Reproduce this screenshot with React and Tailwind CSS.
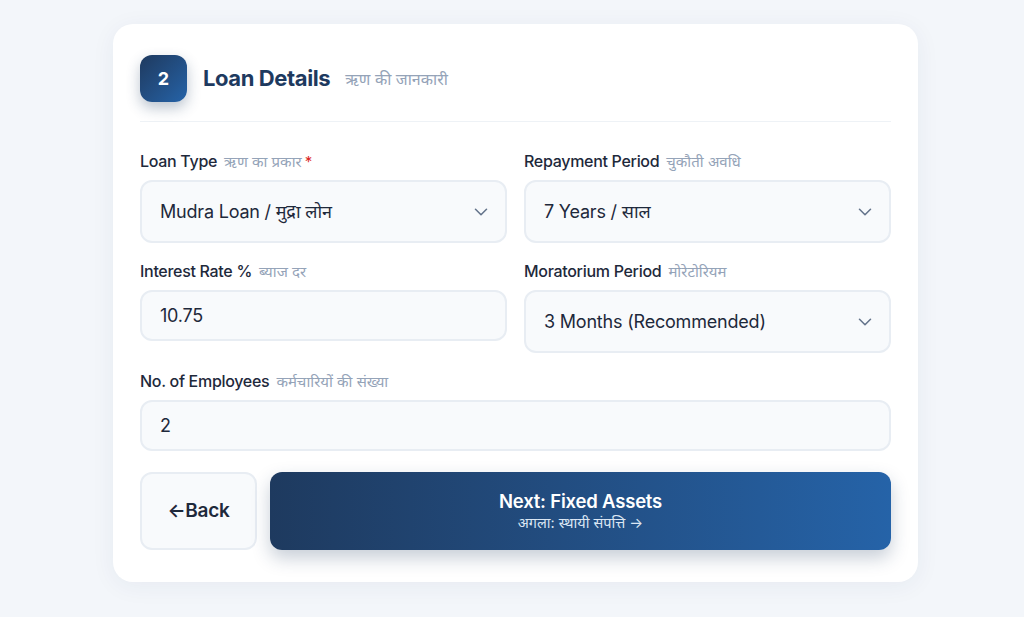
import React from "react";

const font = { fontFamily: 'Inter, "Noto Sans", "Noto Sans CJK SC", sans-serif' };

function Chevron() {
  return (
    <svg width="22" height="22" viewBox="0 0 24 24" fill="none" stroke="#64748b" strokeWidth="1.7" strokeLinecap="round" strokeLinejoin="round">
      <path d="M6 9l6 6 6-6" />
    </svg>
  );
}

function Label({ en, hi, req }) {
  return (
    <div className="flex items-baseline gap-[7px] h-[20px] mb-[9px] leading-[20px]">
      <span className="text-[16px] font-medium text-[#1e293b] tracking-[-0.3px]">{en}</span>
      <span className="text-[15px] text-[#94a3b8]">{hi}</span>
      {req && <span className="text-[15px] text-[#dc2626] -ml-[4px]">*</span>}
    </div>
  );
}

function Select({ value }) {
  return (
    <div className="h-[63px] rounded-[12px] border-2 border-[#e8edf3] bg-[#f8fafc] flex items-center justify-between pl-[18px] pr-[13px]">
      <span className="text-[18px] text-[#1e293b] tracking-[-0.2px]">{value}</span>
      <Chevron />
    </div>
  );
}

function Input({ value }) {
  return (
    <div className="h-[51px] rounded-[12px] border-2 border-[#e8edf3] bg-[#f8fafc] flex items-center pl-[18px]">
      <span className="text-[18px] text-[#1e293b] tracking-[-0.2px]">{value}</span>
    </div>
  );
}

export default function App() {
  return (
    <div className="w-[1024px] h-[617px] bg-[#f3f6fa] pl-[113px] pt-[24px]" style={font}>
      <div className="w-[805px] h-[558px] bg-white rounded-[20px] shadow-[0_4px_24px_rgba(30,58,95,0.06)] px-[27px] pt-[31px]">
        <div className="flex items-center pb-[19px] border-b border-[#eef2f6]">
          <div className="w-[47px] h-[47px] rounded-[12px] bg-gradient-to-br from-[#1e3a5f] to-[#2563a8] shadow-[0_6px_14px_rgba(30,58,95,0.3)] flex items-center justify-center text-white text-[18px] font-bold">2</div>
          <span className="ml-[16px] text-[22px] font-bold text-[#1e3a5f] tracking-[-0.4px]">Loan Details</span>
          <span className="ml-[15px] text-[16px] text-[#94a3b8]">ऋण की जानकारी</span>
        </div>

        <div className="grid grid-cols-2 gap-x-[17px] gap-y-[18px] mt-[29px]">
          <div>
            <Label en="Loan Type" hi="ऋण का प्रकार" req />
            <Select value="Mudra Loan / मुद्रा लोन" />
          </div>
          <div>
            <Label en="Repayment Period" hi="चुकौती अवधि" />
            <Select value="7 Years / साल" />
          </div>
          <div>
            <Label en="Interest Rate %" hi="ब्याज दर" />
            <Input value="10.75" />
          </div>
          <div>
            <Label en="Moratorium Period" hi="मोरेटोरियम" />
            <Select value="3 Months (Recommended)" />
          </div>
          <div className="col-span-2">
            <Label en="No. of Employees" hi="कर्मचारियों की संख्या" />
            <Input value="2" />
          </div>
        </div>

        <div className="flex gap-[13px] mt-[21px]">
          <div className="w-[117px] h-[78px] rounded-[12px] border-2 border-[#e8edf3] bg-[#f8fafc] flex items-center justify-center text-[19px] font-semibold text-[#1e293b] tracking-[-0.3px]">
            ←Back
          </div>
          <div className="flex-1 h-[78px] rounded-[12px] bg-gradient-to-r from-[#1e3a5f] to-[#2563a8] shadow-[0_8px_18px_rgba(30,58,95,0.25)] flex flex-col items-center justify-center text-white">
            <span className="text-[18.5px] font-semibold leading-[23px] tracking-[-0.2px]">Next: Fixed Assets</span>
            <span className="text-[14.5px] text-[#dbe6f3] leading-[19px]">अगला: स्थायी संपत्ति →</span>
          </div>
        </div>
      </div>
    </div>
  );
}
